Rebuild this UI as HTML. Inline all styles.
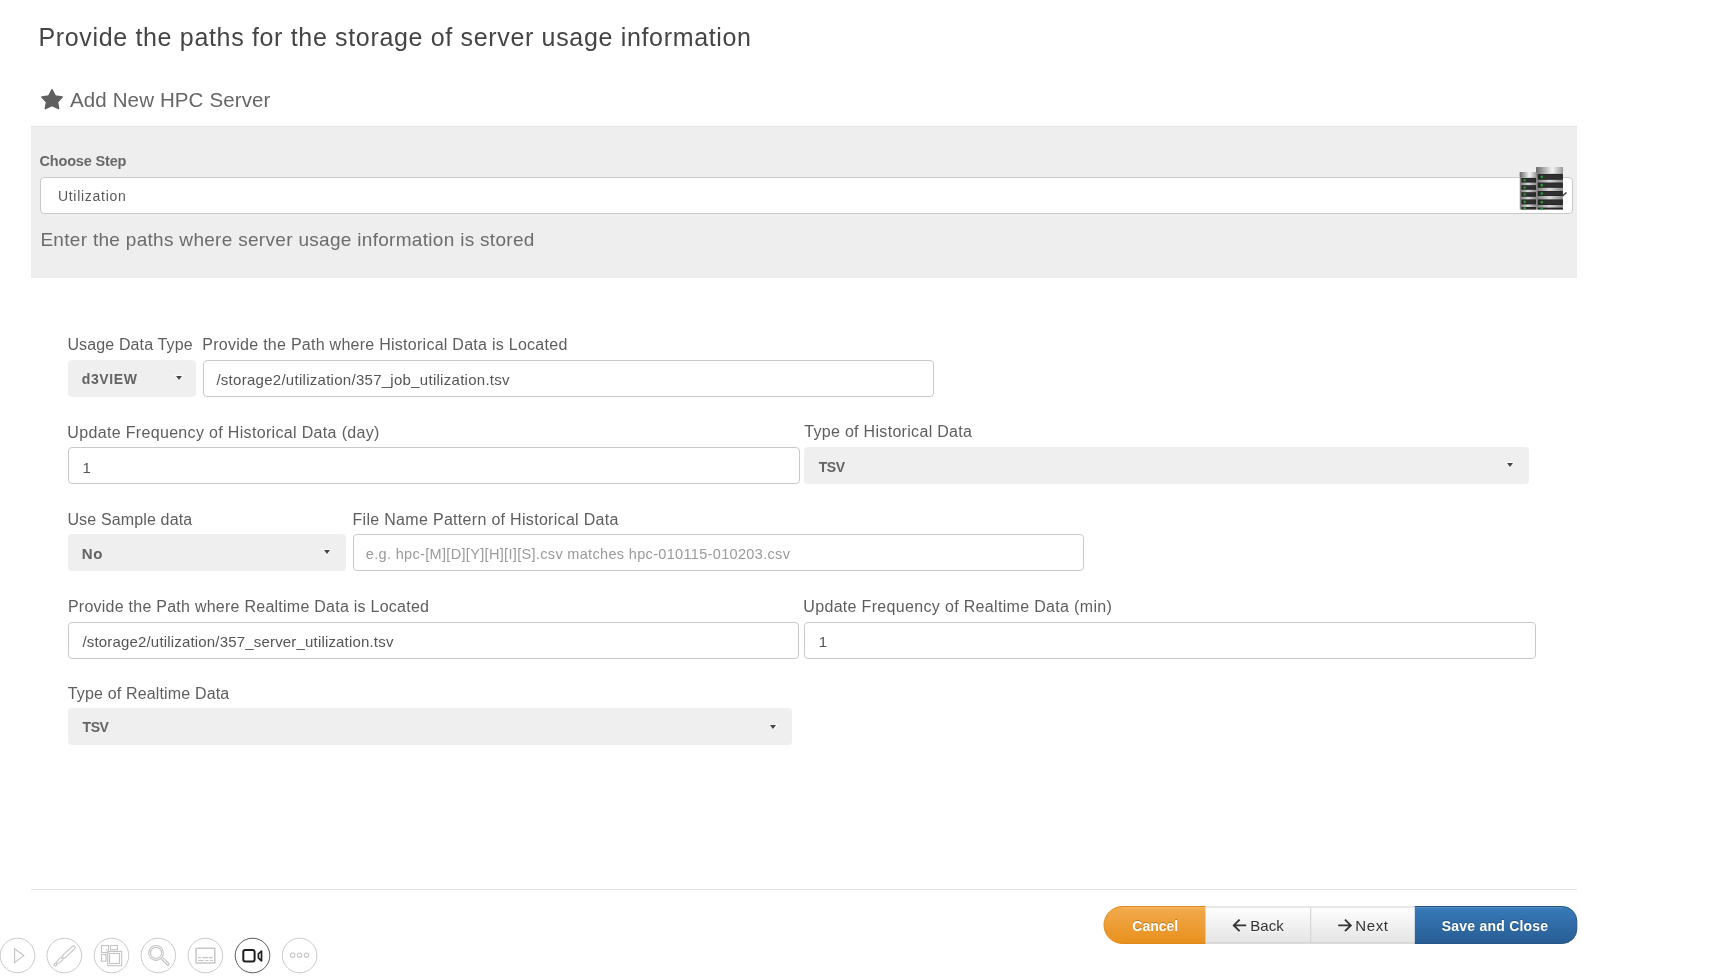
<!DOCTYPE html>
<html><head><meta charset="utf-8"><style>
html,body{margin:0;padding:0;background:#fff;width:1714px;height:978px;overflow:hidden;position:relative;font-family:"Liberation Sans", sans-serif;-webkit-font-smoothing:antialiased}
#wrap{position:absolute;left:0;top:0;width:1714px;height:978px;will-change:transform}
</style></head><body><div id="wrap">
<div style="position:absolute;left:31px;top:126px;width:1546px;height:152px;background:#eeeeee;border-top:1px solid #e4e4e4;box-sizing:border-box"></div>
<div style="position:absolute;left:40px;top:177px;width:1533px;height:37px;background:#fff;border:1px solid #c9c9c9;border-radius:4px;box-sizing:border-box"></div>
<div style="position:absolute;left:68px;top:360px;width:128px;height:37px;background:#efefef;border-radius:4px"></div>
<div style="position:absolute;left:203px;top:360px;width:731px;height:37px;background:#fff;border:1px solid #c9c9c9;border-radius:4px;box-sizing:border-box"></div>
<div style="position:absolute;left:68px;top:447px;width:731.5px;height:37px;background:#fff;border:1px solid #c9c9c9;border-radius:4px;box-sizing:border-box"></div>
<div style="position:absolute;left:804px;top:447px;width:725px;height:37px;background:#efefef;border-radius:4px"></div>
<div style="position:absolute;left:68px;top:534px;width:278px;height:37px;background:#efefef;border-radius:4px"></div>
<div style="position:absolute;left:353px;top:534px;width:731px;height:37px;background:#fff;border:1px solid #c9c9c9;border-radius:4px;box-sizing:border-box"></div>
<div style="position:absolute;left:68px;top:622px;width:731px;height:37px;background:#fff;border:1px solid #c9c9c9;border-radius:4px;box-sizing:border-box"></div>
<div style="position:absolute;left:804px;top:622px;width:731.5px;height:37px;background:#fff;border:1px solid #c9c9c9;border-radius:4px;box-sizing:border-box"></div>
<div style="position:absolute;left:68px;top:708px;width:723.5px;height:37px;background:#efefef;border-radius:4px"></div>
<div style="position:absolute;left:174.3px;top:374.8px;width:0;height:0;border-left:5px solid transparent;border-right:5px solid transparent;border-top:6px solid rgba(255,255,255,0.85)"></div>
<div style="position:absolute;left:175.8px;top:376px;width:0;height:0;border-left:3.5px solid transparent;border-right:3.5px solid transparent;border-top:4px solid #444"></div>
<div style="position:absolute;left:1505px;top:461.8px;width:0;height:0;border-left:5px solid transparent;border-right:5px solid transparent;border-top:6px solid rgba(255,255,255,0.85)"></div>
<div style="position:absolute;left:1506.5px;top:463px;width:0;height:0;border-left:3.5px solid transparent;border-right:3.5px solid transparent;border-top:4px solid #444"></div>
<div style="position:absolute;left:322.4px;top:548.8px;width:0;height:0;border-left:5px solid transparent;border-right:5px solid transparent;border-top:6px solid rgba(255,255,255,0.85)"></div>
<div style="position:absolute;left:323.9px;top:550px;width:0;height:0;border-left:3.5px solid transparent;border-right:3.5px solid transparent;border-top:4px solid #444"></div>
<div style="position:absolute;left:768.9px;top:723.8px;width:0;height:0;border-left:5px solid transparent;border-right:5px solid transparent;border-top:6px solid rgba(255,255,255,0.85)"></div>
<div style="position:absolute;left:770.4px;top:725px;width:0;height:0;border-left:3.5px solid transparent;border-right:3.5px solid transparent;border-top:4px solid #444"></div>
<div style="position:absolute;left:31px;top:889px;width:1546px;height:1px;background:#e3e3e3"></div>
<div style="position:absolute;left:38.40px;top:24.54px;font-size:25px;line-height:25px;font-weight:400;color:#454545;letter-spacing:0.667px;white-space:pre">Provide the paths for the storage of server usage information</div>
<div style="position:absolute;left:70.00px;top:89.65px;font-size:20.5px;line-height:20.5px;font-weight:400;color:#666666;letter-spacing:0.127px;white-space:pre">Add New HPC Server</div>
<div style="position:absolute;left:39.50px;top:153.63px;font-size:14.5px;line-height:14.5px;font-weight:700;color:#686868;letter-spacing:-0.172px;white-space:pre">Choose Step</div>
<div style="position:absolute;left:57.90px;top:188.95px;font-size:14px;line-height:14px;font-weight:400;color:#5a5a5a;letter-spacing:0.72px;white-space:pre">Utilization</div>
<div style="position:absolute;left:40.40px;top:229.82px;font-size:19px;line-height:19px;font-weight:400;color:#6c6c6c;letter-spacing:0.302px;white-space:pre">Enter the paths where server usage information is stored</div>
<div style="position:absolute;left:67.40px;top:336.96px;font-size:16px;line-height:16px;font-weight:400;color:#5e5e5e;letter-spacing:0.133px;white-space:pre">Usage Data Type</div>
<div style="position:absolute;left:202.30px;top:336.96px;font-size:16px;line-height:16px;font-weight:400;color:#5e5e5e;letter-spacing:0.267px;white-space:pre">Provide the Path where Historical Data is Located</div>
<div style="position:absolute;left:81.80px;top:371.55px;font-size:14px;line-height:14px;font-weight:700;color:#636363;letter-spacing:0.615px;white-space:pre">d3VIEW</div>
<div style="position:absolute;left:216.40px;top:372.00px;font-size:15px;line-height:15px;font-weight:400;color:#555555;letter-spacing:0.277px;white-space:pre">/storage2/utilization/357_job_utilization.tsv</div>
<div style="position:absolute;left:67.30px;top:425.26px;font-size:16px;line-height:16px;font-weight:400;color:#5e5e5e;letter-spacing:0.333px;white-space:pre">Update Frequency of Historical Data (day)</div>
<div style="position:absolute;left:82.40px;top:459.80px;font-size:15px;line-height:15px;font-weight:400;color:#555555;letter-spacing:0px;white-space:pre">1</div>
<div style="position:absolute;left:804.20px;top:423.56px;font-size:16px;line-height:16px;font-weight:400;color:#5e5e5e;letter-spacing:0.311px;white-space:pre">Type of Historical Data</div>
<div style="position:absolute;left:818.80px;top:459.65px;font-size:14px;line-height:14px;font-weight:700;color:#636363;letter-spacing:-0.517px;white-space:pre">TSV</div>
<div style="position:absolute;left:67.40px;top:511.66px;font-size:16px;line-height:16px;font-weight:400;color:#5e5e5e;letter-spacing:0.148px;white-space:pre">Use Sample data</div>
<div style="position:absolute;left:81.80px;top:546.10px;font-size:15px;line-height:15px;font-weight:700;color:#636363;letter-spacing:0.6px;white-space:pre">No</div>
<div style="position:absolute;left:352.50px;top:511.66px;font-size:16px;line-height:16px;font-weight:400;color:#5e5e5e;letter-spacing:0.306px;white-space:pre">File Name Pattern of Historical Data</div>
<div style="position:absolute;left:365.80px;top:546.63px;font-size:14.5px;line-height:14.5px;font-weight:400;color:#9a9a9a;letter-spacing:0.33px;white-space:pre">e.g. hpc-[M][D][Y][H][I][S].csv matches hpc-010115-010203.csv</div>
<div style="position:absolute;left:67.90px;top:598.66px;font-size:16px;line-height:16px;font-weight:400;color:#5e5e5e;letter-spacing:0.252px;white-space:pre">Provide the Path where Realtime Data is Located</div>
<div style="position:absolute;left:82.40px;top:633.80px;font-size:15px;line-height:15px;font-weight:400;color:#555555;letter-spacing:0.177px;white-space:pre">/storage2/utilization/357_server_utilization.tsv</div>
<div style="position:absolute;left:803.30px;top:599.26px;font-size:16px;line-height:16px;font-weight:400;color:#5e5e5e;letter-spacing:0.326px;white-space:pre">Update Frequency of Realtime Data (min)</div>
<div style="position:absolute;left:818.80px;top:633.80px;font-size:15px;line-height:15px;font-weight:400;color:#555555;letter-spacing:0px;white-space:pre">1</div>
<div style="position:absolute;left:67.80px;top:685.96px;font-size:16px;line-height:16px;font-weight:400;color:#5e5e5e;letter-spacing:0.155px;white-space:pre">Type of Realtime Data</div>
<div style="position:absolute;left:82.60px;top:720.35px;font-size:14px;line-height:14px;font-weight:700;color:#636363;letter-spacing:-0.517px;white-space:pre">TSV</div>

<svg style="position:absolute;left:0;top:0" width="1714" height="978">
 <defs>
  <linearGradient id="gOr" x1="0" y1="0" x2="0" y2="1"><stop offset="0" stop-color="#f2ab4e"/><stop offset="1" stop-color="#e8901c"/></linearGradient>
  <linearGradient id="gBl" x1="0" y1="0" x2="0" y2="1"><stop offset="0" stop-color="#377bb9"/><stop offset="1" stop-color="#285d94"/></linearGradient>
  <linearGradient id="gGr" x1="0" y1="0" x2="0" y2="1"><stop offset="0" stop-color="#ffffff"/><stop offset="1" stop-color="#e4e4e4"/></linearGradient>
  <linearGradient id="gCap" x1="0" y1="0" x2="1" y2="0"><stop offset="0" stop-color="#6a6a6a"/><stop offset="0.6" stop-color="#f4f4f4"/><stop offset="1" stop-color="#9a9a9a"/></linearGradient>
  <linearGradient id="gSep" x1="0" y1="0" x2="1" y2="0"><stop offset="0" stop-color="#777"/><stop offset="0.5" stop-color="#d8d8d8"/><stop offset="1" stop-color="#888"/></linearGradient>
 </defs>
 <!-- star -->
 <polygon fill="#606060" stroke="#606060" stroke-width="1.3" stroke-linejoin="round" points="52.0,89.6 55.3,95.8 62.2,97.0 57.6,102.0 58.7,108.7 52.0,105.6 45.3,108.7 46.4,102.0 41.8,97.0 48.7,95.8"/>
 <!-- buttons -->
 <path d="M1122.5,906.5 H1205.7 V943.5 H1122.5 A18.5,18.5 0 0 1 1122.5,906.5 Z" fill="url(#gOr)"/>
 <path d="M1122.5,906.5 H1205.7 M1205.7,943.5 H1122.5 A18.5,18.5 0 0 1 1122.5,906.5" fill="none" stroke="#e0891a" stroke-width="1"/>
 <rect x="1205.7" y="906.5" width="209.1" height="37" fill="url(#gGr)"/>
 <line x1="1205.7" y1="907" x2="1414.8" y2="907" stroke="#d2d2d2" stroke-width="1"/>
 <line x1="1205.7" y1="943" x2="1414.8" y2="943" stroke="#c8c8c8" stroke-width="1"/>
 <line x1="1310.7" y1="907" x2="1310.7" y2="943" stroke="#d0d0d0" stroke-width="1"/>
 <path d="M1414.8,906.5 H1562.3 A14.5,14.5 0 0 1 1576.8,921 V929 A14.5,14.5 0 0 1 1562.3,943.5 H1414.8 Z" fill="url(#gBl)"/>
 <path d="M1414.8,906.5 H1562.3 A14.5,14.5 0 0 1 1576.8,921 V929 A14.5,14.5 0 0 1 1562.3,943.5 H1414.8" fill="none" stroke="#275789" stroke-width="1"/>
 <path d="M1415.5,907.8 H1562" stroke="#ffffff" stroke-opacity="0.18" stroke-width="1"/>
 <path d="M1122.5,907.8 H1205" stroke="#ffffff" stroke-opacity="0.2" stroke-width="1"/>
 <!-- arrows -->
 <g fill="none" stroke="#333" stroke-width="1.9" stroke-linecap="butt" stroke-linejoin="miter">
  <path d="M1233.6,925.4 H1246.2 M1239.6,919.6 L1233.8,925.4 L1239.6,931.2"/>
  <path d="M1351,925.4 H1338.2 M1345,919.6 L1350.8,925.4 L1345,931.2"/>
 </g>
 <!-- toolbar -->
 <g fill="none" stroke="#c9c9c9" stroke-width="1">
  <circle cx="17.5" cy="955.5" r="17.3"/>
  <circle cx="64.3" cy="955.5" r="17.3"/>
  <circle cx="111.5" cy="955.5" r="17.3"/>
  <circle cx="158.3" cy="955.5" r="17.3"/>
  <circle cx="205.4" cy="955.5" r="17.3"/>
  <circle cx="299.6" cy="955.5" r="17.3"/>
 </g>
 <circle cx="252.5" cy="955.5" r="17.3" fill="none" stroke="#5a5a5a" stroke-width="1"/>
 <g fill="none" stroke="#c4c4c4" stroke-width="1.1">
  <path d="M14.6,948.8 L23.8,955.6 L14.6,962.6 Z"/>
  <g transform="translate(55.3,964.6) rotate(-43)">
   <circle cx="0" cy="0" r="1.25"/>
   <path d="M1.2,-0.6 Q5,-1.9 9.2,-1.75 M1.2,0.6 Q5,1.9 9.2,1.75"/>
   <path d="M9.2,-1.75 V1.75 M10.6,-1.75 V1.75"/>
   <path d="M10.6,-1.75 H24.8 A1.75,1.75 0 0 1 24.8,1.75 H10.6"/>
  </g>
  <rect x="101.5" y="945.5" width="7" height="7"/>
  <rect x="110.5" y="945.5" width="7" height="4.3"/>
  <rect x="101.5" y="954.5" width="4.5" height="6.7"/>
  <rect x="107.7" y="951.4" width="14" height="14.3"/>
  <rect x="109.5" y="953.5" width="10" height="10"/>
  <path d="M106,950.5 L107,949.5"/>
  <circle cx="156.05" cy="952.95" r="7.4"/>
  <circle cx="156.05" cy="952.95" r="5.6"/>
  <path d="M161.1,958.9 L167.3,965 A1.1,1.1 0 0 0 168.9,963.5 L162.6,957.4"/>
  <rect x="196.1" y="948.3" width="18.7" height="14.7" stroke-width="1.4"/>
  <path d="M198,957.6 H200.8 M202.3,957.6 H207.9 M208.9,957.6 H212.8 M198,960.5 H203.7 M205.2,960.5 H208.6 M210.1,960.5 H212.8" stroke-width="1.1"/>
  <circle cx="292.6" cy="955.2" r="2.2"/><circle cx="299.5" cy="955.2" r="2.2"/><circle cx="306.5" cy="955.2" r="2.2"/>
 </g>
 <g fill="none" stroke="#1e1e1e" stroke-width="2" stroke-linejoin="round">
  <rect x="243.3" y="950" width="11.3" height="11.5" rx="2"/>
  <path d="M261.5,951.2 L258.4,953.8 V957.8 L261.5,960.8 Z" stroke-width="1.7"/>
 </g>
 <!-- server icon -->
 <g>
  <rect x="1519.8" y="172.1" width="16.40000000000009" height="37.400000000000006" fill="url(#gSep)"/>
  <rect x="1519.8" y="172.1" width="16.40000000000009" height="5.2" fill="url(#gCap)" rx="1.2"/>
  <rect x="1521.3999999999999" y="178" width="14.800000000000091" height="4.599999999999994" fill="#262626"/>
  <rect x="1524.3" y="178.8" width="10.400000000000091" height="2.7999999999999945" fill="#333" opacity="0.8"/>
  <circle cx="1524.6" cy="180.30" r="1.3" fill="#289a30"/>
  <rect x="1521.3999999999999" y="185.2" width="14.800000000000091" height="4.600000000000023" fill="#262626"/>
  <rect x="1524.3" y="186.0" width="10.400000000000091" height="2.800000000000023" fill="#333" opacity="0.8"/>
  <circle cx="1524.6" cy="187.50" r="1.3" fill="#289a30"/>
  <rect x="1521.3999999999999" y="192.2" width="14.800000000000091" height="4.600000000000023" fill="#262626"/>
  <rect x="1524.3" y="193.0" width="10.400000000000091" height="2.800000000000023" fill="#333" opacity="0.8"/>
  <circle cx="1524.6" cy="194.50" r="1.3" fill="#289a30"/>
  <rect x="1521.3999999999999" y="199.4" width="14.800000000000091" height="5.0" fill="#262626"/>
  <rect x="1524.3" y="200.20000000000002" width="10.400000000000091" height="3.2" fill="#333" opacity="0.8"/>
  <circle cx="1524.6" cy="201.90" r="1.3" fill="#289a30"/>
  <rect x="1521.3999999999999" y="207" width="14.800000000000091" height="2.5" fill="#262626"/>
  <rect x="1524.3" y="207.8" width="10.400000000000091" height="0.7" fill="#333" opacity="0.8"/>
  <circle cx="1524.6" cy="208.25" r="1.3" fill="#289a30"/>
  <rect x="1536.2" y="167" width="26.700000000000045" height="42.5" fill="url(#gSep)"/>
  <rect x="1536.2" y="167" width="26.700000000000045" height="6.2" fill="url(#gCap)" rx="1.2"/>
  <rect x="1537.8" y="174" width="25.100000000000044" height="5.800000000000011" fill="#262626"/>
  <rect x="1540.7" y="174.8" width="20.700000000000045" height="4.0000000000000115" fill="#333" opacity="0.8"/>
  <circle cx="1541.8" cy="176.90" r="1.3" fill="#289a30"/>
  <rect x="1537.8" y="182.5" width="25.100000000000044" height="5.300000000000011" fill="#262626"/>
  <rect x="1540.7" y="183.3" width="20.700000000000045" height="3.5000000000000115" fill="#333" opacity="0.8"/>
  <circle cx="1541.8" cy="185.15" r="1.3" fill="#289a30"/>
  <rect x="1537.8" y="191" width="25.100000000000044" height="5" fill="#262626"/>
  <rect x="1540.7" y="191.8" width="20.700000000000045" height="3.2" fill="#333" opacity="0.8"/>
  <circle cx="1541.8" cy="193.50" r="1.3" fill="#289a30"/>
  <rect x="1537.8" y="199.4" width="25.100000000000044" height="5.599999999999994" fill="#262626"/>
  <rect x="1540.7" y="200.20000000000002" width="20.700000000000045" height="3.7999999999999945" fill="#333" opacity="0.8"/>
  <circle cx="1541.8" cy="202.20" r="1.3" fill="#289a30"/>
  <rect x="1537.8" y="207.6" width="25.100000000000044" height="1.9000000000000057" fill="#262626"/>
  <rect x="1540.7" y="208.4" width="20.700000000000045" height="0.10000000000000564" fill="#333" opacity="0.8"/>
  <circle cx="1541.8" cy="208.55" r="1.3" fill="#289a30"/>
  <path d="M1562.5,196 L1566.5,192.5" stroke="#444" stroke-width="1.5" fill="none"/>
 </g>
</svg>


<div style="position:absolute;left:1132.3px;top:918.85px;font-size:14px;line-height:14px;font-weight:700;color:#fff;text-shadow:0 -1px 0 rgba(0,0,0,0.25);white-space:pre">Cancel</div>
<div style="position:absolute;left:1250.3px;top:918.2px;font-size:15px;line-height:15px;color:#333;text-shadow:0 1px 1px rgba(255,255,255,0.75);white-space:pre">Back</div>
<div style="position:absolute;left:1355.3px;top:918.2px;font-size:15px;line-height:15px;color:#333;letter-spacing:0.6px;text-shadow:0 1px 1px rgba(255,255,255,0.75);white-space:pre">Next</div>
<div style="position:absolute;left:1441.8px;top:919.15px;font-size:14px;line-height:14px;font-weight:700;color:#fff;letter-spacing:0.22px;text-shadow:0 -1px 0 rgba(0,0,0,0.25);white-space:pre">Save and Close</div>

</div></body></html>
